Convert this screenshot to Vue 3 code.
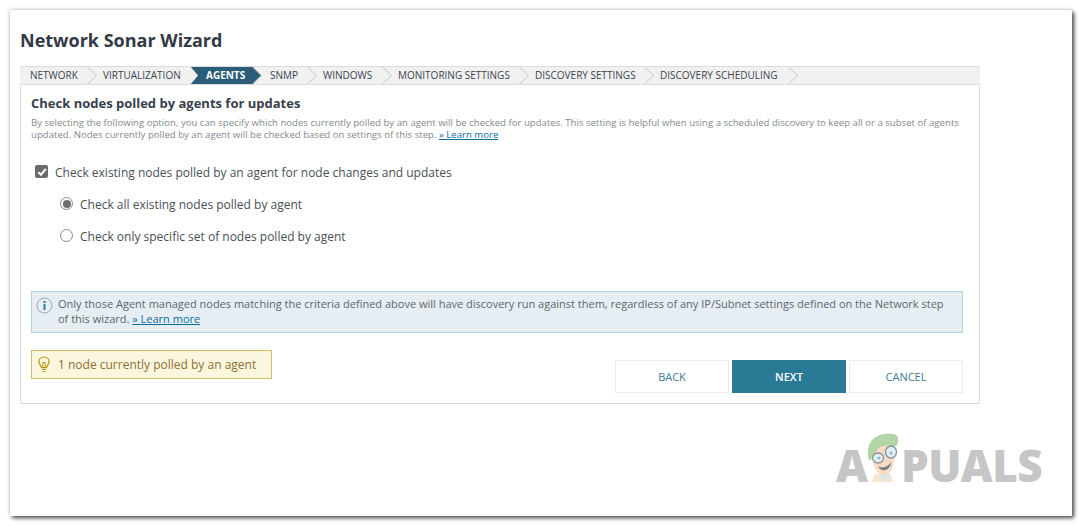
<script setup>
const steps = [
  { label: 'NETWORK', width: 73 },
  { label: 'VIRTUALIZATION', width: 99 },
  { label: 'AGENTS', width: 70, active: true },
  { label: 'SNMP', width: 53 },
  { label: 'WINDOWS', width: 75 },
  { label: 'MONITORING SETTINGS', width: 137 },
  { label: 'DISCOVERY SETTINGS', width: 125 },
  { label: 'DISCOVERY SCHEDULING', width: 144 }
]
</script>

<template>
  <div class="page">
    <div class="window">
      <h1 class="title">Network Sonar Wizard</h1>
      <div class="wizard">
        <div class="tabs">
          <div
            v-for="s in steps"
            :key="s.label"
            class="tab"
            :class="{ active: s.active }"
            :style="{ width: s.width + 'px' }"
          >
            <svg class="chev" width="11" height="17" viewBox="0 0 11 17">
              <path d="M0.5 0 L9.5 8.5 L0.5 17" fill="none" stroke="#c6c6c6" stroke-width="1" />
            </svg>
            <span class="tab-label">{{ s.label }}</span>
          </div>
        </div>
        <div class="panel">
          <h2 class="heading">Check nodes polled by agents for updates</h2>
          <p class="desc">
            By selecting the following option, you can specify which nodes currently polled by an agent will be checked for updates. This setting is helpful when using a scheduled discovery to keep all or a subset of agents updated. Nodes currently polled by an agent will be checked based on settings of this step.
            <a class="link">» Learn more</a>
          </p>
          <div class="check-row">
            <span class="checkbox">
              <svg width="10" height="10" viewBox="0 0 10 10">
                <path d="M1.3 5.2 L3.9 7.8 L8.8 1.8" fill="none" stroke="#fff" stroke-width="2" />
              </svg>
            </span>
            <span>Check existing nodes polled by an agent for node changes and updates</span>
          </div>
          <div class="radios">
            <div class="radio-row">
              <span class="radio on"><i></i></span>
              <span>Check all existing nodes polled by agent</span>
            </div>
            <div class="radio-row">
              <span class="radio"></span>
              <span>Check only specific set of nodes polled by agent</span>
            </div>
          </div>
          <div class="info">
            <svg class="info-icon" width="17" height="17" viewBox="0 0 17 17">
              <circle cx="8.5" cy="8.5" r="7.5" fill="none" stroke="#9aa5ac" stroke-width="1" />
              <rect x="7.5" y="7" width="2" height="6" fill="#2a7f9f" />
              <rect x="7.5" y="4" width="2" height="2" fill="#2a7f9f" />
            </svg>
            <p>
              Only those Agent managed nodes matching the criteria defined above will have discovery run against them, regardless of any IP/Subnet settings defined on the Network step of this wizard.
              <a class="link">» Learn more</a>
            </p>
          </div>
          <div class="footer">
            <div class="hint">
              <svg width="12" height="17" viewBox="0 0 12 17">
                <path d="M6 1 C2.8 1 1 3.3 1 5.7 C1 8 2.7 9.2 3.5 11.6 L8.5 11.6 C9.3 9.2 11 8 11 5.7 C11 3.3 9.2 1 6 1 Z" fill="none" stroke="#b8960f" stroke-width="1.2" />
                <path d="M4.8 11.5 L4.8 6.5 L7.2 6.5 L7.2 11.5" fill="none" stroke="#b8960f" stroke-width="1" />
                <path d="M4 13.5 H8 M4.5 15.5 H7.5" stroke="#b8960f" stroke-width="1.2" />
              </svg>
              <span>1 node currently polled by an agent</span>
            </div>
            <div class="buttons">
              <button class="btn">BACK</button>
              <button class="btn primary">NEXT</button>
              <button class="btn">CANCEL</button>
            </div>
          </div>
        </div>
      </div>
      <div class="watermark">
        <span>A</span>
        <svg class="wm-face" width="35" height="49" viewBox="0 0 35 49">
          <path d="M6 49 L8 42 L14 40 L24 40 L27 49 Z" fill="#f7e6cf" />
          <path d="M14 42 L19 49 L23 42 Z" fill="#d5e6ee" />
          <path d="M7 20 C6 33 11 42 18 42 C24 42 28 35 29 22 L26 8 L10 10 Z" fill="#f6dcc6" />
          <path d="M3 28 C-1 14 5 3 18 1 C26 0 32 1 32 5 C33 12 30 14 28 13 C22 12 14 12 11 17 C9 20 7 26 3 28 Z" fill="#b3d6a9" />
          <ellipse cx="12" cy="25" rx="5.5" ry="5" fill="#dfeef4" stroke="#8f8f8f" stroke-width="1.3" />
          <ellipse cx="25" cy="19" rx="5.5" ry="6" fill="#dfeef4" stroke="#8f8f8f" stroke-width="1.3" />
          <circle cx="13" cy="25" r="1.5" fill="#8fb4c4" />
          <circle cx="25" cy="20" r="1.5" fill="#8fb4c4" />
          <path d="M12 33 C16 36 22 34 25 29 C25 37 15 41 12 33 Z" fill="#7d7d7d" />
        </svg>
        <span class="wm-rest">PUALS</span>
      </div>
    </div>
  </div>
</template>

<style scoped>
.page {
  width: 1083px;
  height: 527px;
  padding: 10px;
  box-sizing: border-box;
  background: #fff;
  font-family: "Open Sans", sans-serif;
  overflow: hidden;
}
.window {
  position: relative;
  height: 506px;
  width: 1062px;
  background: #fff;
  box-shadow: 2px 2px 4px #444, -1px -1px 3px #e4e4e4;
  padding: 19px 0 0 10px;
  box-sizing: border-box;
}
.title {
  margin: 0;
  font-size: 18px;
  line-height: 22px;
  font-weight: 700;
  color: #333a45;
}
.wizard {
  width: 960px;
  margin-top: 15px;
}
.tabs {
  display: flex;
  height: 17px;
  background: #f1f1f1;
  border-top: 1px solid #dcdcdc;
}
.tab {
  position: relative;
  box-sizing: border-box;
  padding-left: 10px;
  font-size: 10px;
  line-height: 17px;
  color: #3a4450;
  white-space: nowrap;
}
.tab-label {
  position: relative;
}
.chev {
  position: absolute;
  right: -5px;
  top: 0;
}
.tab:nth-child(2) .chev {
  right: -9px;
}
.tab.active {
  color: #fff;
  font-weight: 700;
  padding-left: 15px;
  margin-left: -1px;
  margin-right: -1px;
}
.tab.active .chev {
  right: -2px;
}
.tab.active::before {
  content: "";
  position: absolute;
  inset: 0;
  background: #2c5d78;
  clip-path: polygon(0 0, calc(100% - 8px) 0, 100% 50%, calc(100% - 8px) 100%, 0 100%, 7px 50%);
}
.panel {
  height: 320px;
  box-sizing: border-box;
  border: 1px solid #dcdcdc;
  padding: 9px 16px 10px 10px;
  position: relative;
}
.heading {
  margin: 0;
  font-size: 13px;
  line-height: 18px;
  font-weight: 700;
  color: #38404c;
}
.desc {
  margin: 5px 0 0;
  font-size: 9.62px;
  line-height: 12px;
  color: #85898e;
  width: 935px;
}
.link {
  color: #0b6f9e;
  text-decoration: underline;
}
.check-row {
  display: flex;
  align-items: center;
  gap: 7px;
  margin: 24px 0 0 4px;
  font-size: 12px;
  line-height: 16px;
  color: #4a4f57;
}
.checkbox {
  width: 13px;
  height: 13px;
  margin-bottom: 3px;
  background: #6b6b6b;
  border-radius: 2px;
  display: flex;
  align-items: center;
  justify-content: center;
}
.radios {
  display: flex;
  flex-direction: column;
  gap: 16px;
  margin: 16px 0 0 29px;
}
.radio-row {
  display: flex;
  align-items: center;
  gap: 7px;
  font-size: 12px;
  line-height: 16px;
  color: #4a4f57;
}
.radio {
  width: 13px;
  height: 13px;
  margin-bottom: 3px;
  box-sizing: border-box;
  border: 1px solid #8a8a8a;
  border-radius: 50%;
  display: flex;
  align-items: center;
  justify-content: center;
}
.radio i {
  display: block;
  width: 8px;
  height: 8px;
  border-radius: 50%;
  background: #6f6f6f;
}
.info {
  display: flex;
  gap: 5px;
  height: 42px;
  box-sizing: border-box;
  margin-top: 46px;
  background: #e6eef3;
  border: 1px solid #aed3e2;
  padding: 5px 4px 0 4px;
}
.info-icon {
  flex: none;
}
.info p {
  margin: -1px 0 0;
  font-size: 11px;
  line-height: 15px;
  color: #5c6670;
  width: 890px;
}
.footer {
  display: flex;
  justify-content: space-between;
  margin-top: 17px;
}
.hint {
  display: flex;
  align-items: center;
  gap: 8px;
  width: 241px;
  height: 29px;
  box-sizing: border-box;
  background: #fbf7df;
  border: 1px solid #d6bd62;
  padding-left: 6px;
  font-size: 12px;
  color: #8f7033;
}
.buttons {
  display: flex;
  gap: 3px;
  margin-top: 10px;
}
.btn {
  width: 114px;
  height: 33px;
  box-sizing: border-box;
  background: #fff;
  border: 1px solid #ececec;
  font-family: inherit;
  font-size: 11px;
  color: #3f7a94;
  padding: 0;
}
.btn.primary {
  background: #2a7995;
  border-color: #2a7995;
  color: #fff;
  font-weight: 600;
}
.watermark {
  position: absolute;
  left: 826px;
  top: 423px;
  display: flex;
  align-items: flex-end;
  height: 54px;
  color: #c6c6c6;
  font-weight: 800;
  font-size: 44px;
  line-height: 44px;
}
.wm-face {
  margin: 0 0 5px -2px;
}
.wm-rest {
  letter-spacing: -0.6px;
}
</style>
